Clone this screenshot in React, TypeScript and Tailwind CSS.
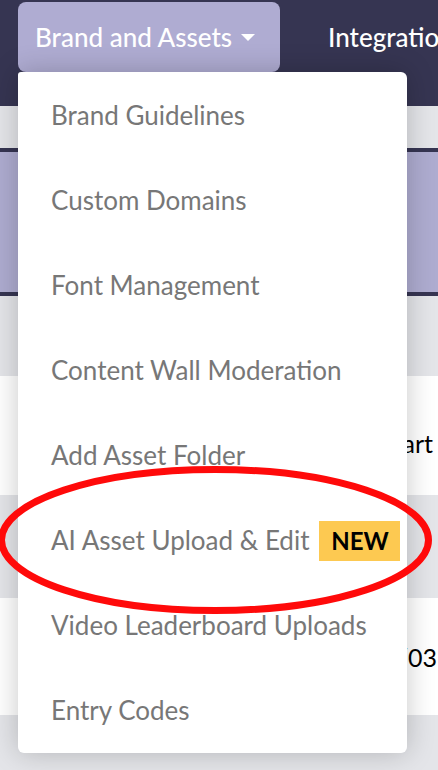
import React from "react";

const items = [
  "Brand Guidelines",
  "Custom Domains",
  "Font Management",
  "Content Wall Moderation",
  "Add Asset Folder",
  "AI Asset Upload & Edit",
  "Video Leaderboard Uploads",
  "Entry Codes",
];

export default function App() {
  return (
    <div
      className="relative w-[438px] h-[770px] overflow-hidden bg-[#e4e5e9]"
      style={{ fontFamily: "Lato, 'Noto Sans', sans-serif" }}
    >
      {/* Background page */}
      <div className="flex flex-col">
        <div className="h-[106px] bg-[#363552] flex items-start pt-[2px] pl-[18px] gap-[48px] overflow-hidden">
          <div className="shrink-0 h-[70px] w-[262px] rounded-[8px] bg-[#afacd2] flex items-center pl-[17px] gap-[9px]">
            <span className="text-white text-[26px] font-medium whitespace-nowrap">
              Brand and Assets
            </span>
            <svg width="14" height="8" viewBox="0 0 14 8" className="mt-[1px] shrink-0">
              <path d="M0 0 L14 0 L7 7 Z" fill="white" />
            </svg>
          </div>
          <div className="shrink-0 h-[70px] flex items-center">
            <span className="text-white text-[26px] font-medium whitespace-nowrap">
              Integrations
            </span>
          </div>
        </div>
        <div className="h-[42px] bg-[#e4e5e9]" />
        <div className="h-[4px] bg-[#363552]" />
        <div className="h-[140px] bg-[#aeacd0]" />
        <div className="h-[4px] bg-[#363552]" />
        <div className="h-[80px] bg-[#e4e5e9]" />
        <div className="h-[119px] bg-white flex items-center justify-end pr-[5px]">
          <span className="pt-[16px] text-[25px] text-black whitespace-nowrap">Start</span>
        </div>
        <div className="h-[103px] bg-[#e4e5e9]" />
        <div className="h-[117px] bg-white flex items-center justify-end pr-[1px]">
          <span className="pt-[2px] text-[25px] text-black whitespace-nowrap">2024/03</span>
        </div>
        <div className="h-[60px] bg-[#e4e5e9]" />
      </div>

      {/* Dropdown menu */}
      <div className="absolute left-[18px] top-[72px] w-[389px] h-[681px] bg-white rounded-b-[6px] rounded-tr-[6px] rounded-tl-[3px] shadow-[0_0_28px_rgba(0,0,0,0.22)] pt-[1px] flex flex-col">
        {items.map((label) => (
          <div key={label} className="h-[85px] flex items-center pl-[33px] gap-[10px]">
            <span className="text-[26px] text-[#777777] whitespace-nowrap">{label}</span>
            {label === "AI Asset Upload & Edit" && (
              <span className="shrink-0 h-[40px] w-[81px] bg-[#fdc951] flex items-center justify-center text-[24px] font-bold text-black">
                NEW
              </span>
            )}
          </div>
        ))}
      </div>

      {/* Red annotation ellipse */}
      <svg
        className="absolute left-0 top-0 pointer-events-none"
        width="438"
        height="770"
        viewBox="0 0 438 770"
      >
        <ellipse cx="215" cy="540" rx="213.5" ry="70.5" fill="none" stroke="#ff0a0a" strokeWidth="7" />
      </svg>
    </div>
  );
}
